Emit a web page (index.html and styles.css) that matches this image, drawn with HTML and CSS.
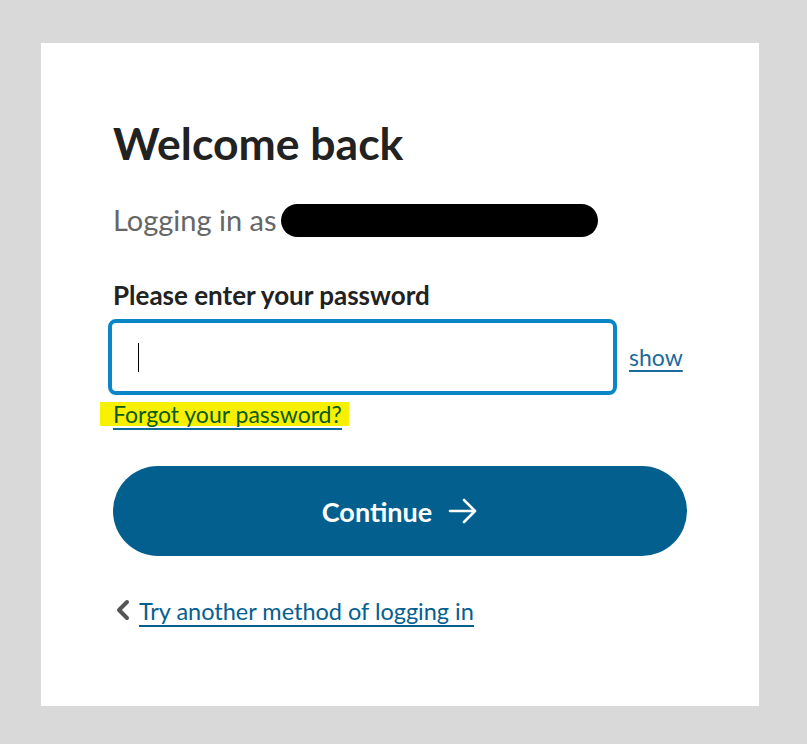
FILE: index.html
```html
<!DOCTYPE html>
<html lang="en">
<head>
<meta charset="utf-8">
<title>Welcome back</title>
<link rel="stylesheet" href="styles.css">
</head>
<body>
<main class="card">
  <h1 class="title">Welcome back</h1>
  <p class="logging">Logging in as <span class="redact"></span></p>
  <label class="label" for="pw">Please enter your password</label>
  <div class="field-row">
    <div class="input"><span class="caret"></span></div>
    <a class="show" href="#">show</a>
  </div>
  <a class="forgot" href="#"><span>Forgot your password?</span></a>
  <button class="continue" type="button">Continue
    <svg class="arrow" width="30" height="26" viewBox="0 0 30 26" fill="none" stroke="#fff" stroke-width="2.6" stroke-linecap="round" stroke-linejoin="round"><path d="M2 13h25M16 2l11 11-11 11"/></svg>
  </button>
  <div class="back">
    <svg class="chev" width="15" height="22" viewBox="0 0 15 22" fill="none" stroke="#555" stroke-width="4" stroke-linecap="round" stroke-linejoin="round"><path d="M12 3L4 11l8 8"/></svg>
    <a class="back-link" href="#">Try another method of logging in</a>
  </div>
</main>
</body>
</html>
```
FILE: styles.css
```css
html, body { margin: 0; padding: 0; }
body {
  background: #d9d9d9;
  width: 807px;
  height: 744px;
  font-family: "Lato", "Liberation Sans", sans-serif;
  overflow: hidden;
}
.card {
  box-sizing: border-box;
  margin: 43px 0 0 41px;
  width: 718px;
  height: 663px;
  background: #fff;
  padding: 78px 72px 0 72px;
  display: flex;
  flex-direction: column;
  align-items: flex-start;
}
.title {
  margin: 0;
  font-size: 44.5px;
  line-height: 44px;
  font-weight: 700;
  color: #222;
}
.logging {
  margin: 38px 0 0 0;
  font-size: 29px;
  line-height: 34px;
  color: #666;
  display: flex;
  align-items: center;
}
.redact {
  display: inline-block;
  width: 317px;
  height: 33px;
  border-radius: 17px;
  background: #000;
  margin-left: 4px;
}
.label {
  margin-top: 43px;
  font-size: 26px;
  line-height: 30px;
  font-weight: 700;
  color: #222;
}
.field-row {
  margin-top: 9px;
  margin-left: -5px;
  display: flex;
  align-items: center;
  gap: 12px;
}
.input {
  box-sizing: border-box;
  width: 509px;
  height: 76px;
  border: 4px solid #0a86c8;
  border-radius: 8px;
  display: flex;
  align-items: center;
  padding-left: 26px;
}
.caret {
  width: 1px;
  height: 29px;
  background: #000;
}
.show {
  font-size: 23px;
  color: #1b6a9b;
  text-decoration: underline;
  text-underline-offset: 4px;
}
.forgot {
  margin-top: 7px;
  margin-left: -13px;
  background: #f7f000;
  padding: 0 7px 0 13px;
  font-size: 23px;
  line-height: 24px;
  color: #0b5a1e;
  text-decoration: none;
}
.forgot span {
  border-bottom: 2px solid #0a6a96;
}
.continue {
  margin-top: 40px;
  width: 574px;
  height: 90px;
  border: 0;
  border-radius: 45px;
  background: #03608e;
  color: #fff;
  font-family: inherit;
  font-size: 27px;
  font-weight: 700;
  display: flex;
  align-items: center;
  justify-content: center;
  gap: 16px;
  padding: 0;
}
.back {
  margin-top: 41px;
  margin-left: 2px;
  display: flex;
  align-items: center;
  gap: 9px;
}
.chev {
  margin-bottom: 4px;
}
.back-link {
  font-size: 23.5px;
  line-height: 28px;
  color: #05608f;
  text-decoration: none;
  border-bottom: 2px solid #05608f;
}
```
